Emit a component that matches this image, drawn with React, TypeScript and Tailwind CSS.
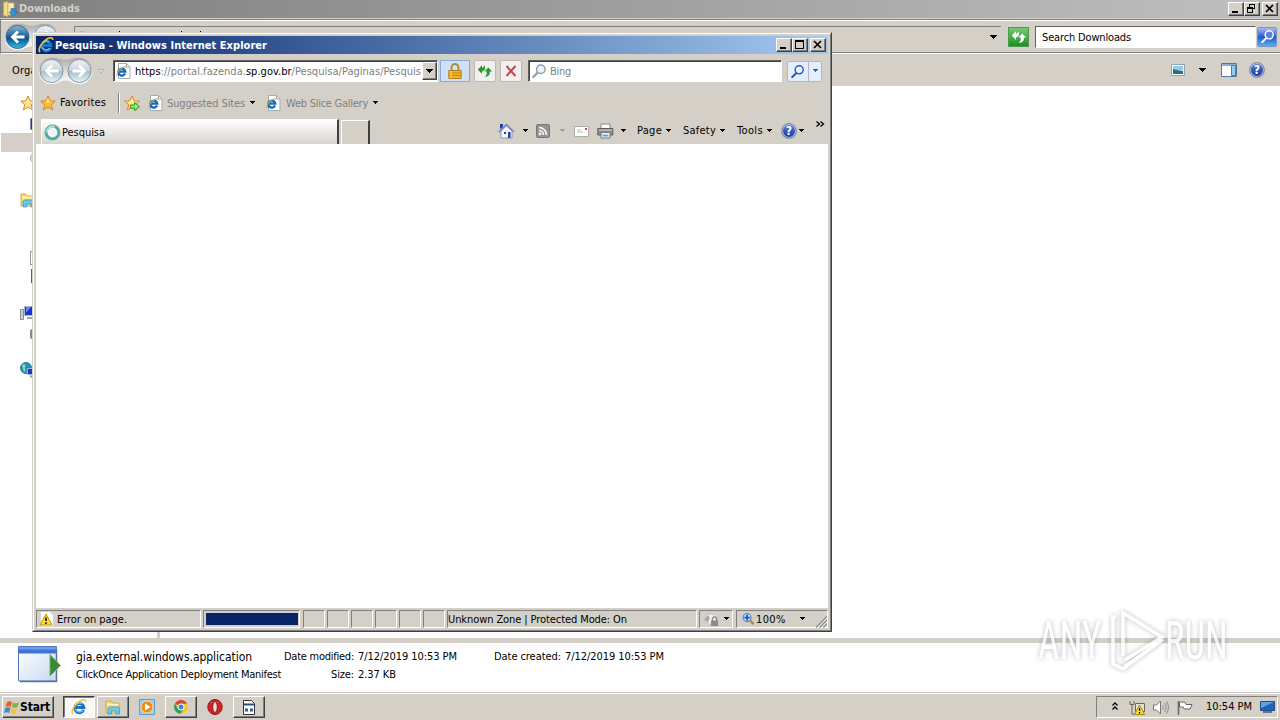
import React, { useLayoutEffect, useRef, useState } from 'react';
import clsx from 'clsx';

// Text squeezed or spread to the width of its box, like the hinted system font does
const Label: React.FC<{ className?: string; children: React.ReactNode }> = ({ className, children }) => {
  const box = useRef<HTMLDivElement>(null);
  const text = useRef<HTMLSpanElement>(null);
  const [spacing, setSpacing] = useState(0);

  useLayoutEffect(() => {
    if (!box.current || !text.current) return;
    const count = (text.current.textContent || '').length;
    if (count < 2) return;
    const diff = box.current.clientWidth - text.current.getBoundingClientRect().width;
    setSpacing((s) => s + diff / count);
  }, []);

  return (
    <div ref={box} className={clsx('shrink-0 whitespace-nowrap', className)}>
      <span ref={text} className="inline-block" style={{ letterSpacing: `${spacing}px` }}>
        {children}
      </span>
    </div>
  );
};

const Arrow: React.FC<{ className?: string }> = ({ className }) => (
  <svg className={clsx('shrink-0', className)} width="7" height="4" viewBox="0 0 7 4" fill="currentColor" shapeRendering="crispEdges">
    <path d="M0.5 0h6L3.5 3.5z" />
  </svg>
);

const BigArrow: React.FC<{ className?: string }> = ({ className }) => (
  <svg className={clsx('shrink-0', className)} width="9" height="5" viewBox="0 0 9 5" fill="currentColor" shapeRendering="crispEdges">
    <path d="M0.5 0h8L4.500 4.500z" />
  </svg>
);

type IconProps = { className?: string; size?: number };

const IeLogo: React.FC<IconProps> = ({ className, size = 16 }) => (
  <svg className={clsx('shrink-0', className)} width={size} height={size} viewBox="0 0 16 16" fill="none">
    <path d="M12.600 10.800A4.600 4.600 0 1 1 12.900 8.600H5" stroke="#1c76c6" strokeWidth="3" />
    <path d="M12 11.200A4.700 4.700 0 0 1 4 10M4.400 6.200A4.600 4.600 0 0 1 11 4.800" stroke="#6fcbf7" strokeWidth="1.200" />
    <path d="M2.200 15C-.8 13 3.600 5.200 9 2c3-1.700 6-1.700 5.800.9" stroke="#f7c52f" strokeWidth="1.600" />
  </svg>
);

const IePage: React.FC<IconProps> = ({ className }) => (
  <svg className={clsx('shrink-0', className)} width="15" height="16" viewBox="0 0 15 16" fill="none">
    <path d="M2.500.5h8l3.500 3.500v11.500H2.500z" fill="#fff" stroke="#a3abb5" />
    <path d="M10.500.5v3.500H14" stroke="#a3abb5" />
    <path d="M9 10.600A3.500 3.500 0 1 1 9.300 8.700H3.500" stroke="#1467b8" strokeWidth="2.300" />
    <path d="M1.200 13C0 11.500 3 6.500 6.500 4.500c2-1.100 3.500-1.200 3.600.4" stroke="#e5ad21" strokeWidth="1.100" />
  </svg>
);

const Star: React.FC<IconProps & { arrow?: boolean; pale?: boolean }> = ({ className, arrow, pale }) => (
  <svg className={clsx('shrink-0', className)} width="16" height="16" viewBox="0 0 16 16" strokeLinejoin="round">
    <path d="M8 1l2.100 4.800 5.200.4-4 3.500 1.300 5.200L8 12.200l-4.600 2.700 1.300-5.200-4-3.500 5.200-.4z" fill={arrow || pale ? '#ffe28a' : '#fdbb32'} stroke="#dc861b" />
    <path d="M8 3l1.300 3.600 3 .4-6.500.6z" fill="#fff3b8" />
    {arrow && <path d="M6.500 10h4V7.500l5 4.200-5 4V13.200h-4z" fill="#8bf06a" stroke="#228d20" strokeWidth=".9" />}
  </svg>
);

const Folder: React.FC<IconProps> = ({ className, size = 16 }) => (
  <svg className={clsx('shrink-0', className)} width={size} height={size} viewBox="0 0 16 16">
    <path d="M1 2h5l1 2h7v10H1z" fill="#f7dd74" stroke="#c79d33" strokeWidth=".8" />
    <path d="M2 5.500h11.500" stroke="#fff6c9" strokeWidth="1.500" />
    <path d="M3 15V9.500C3 8.500 4 8 5 8h7.500c1 0 2 .6 2 1.500V15H11v-3H6.500v3z" fill="#6cc8ec" stroke="#3f95c4" strokeWidth=".8" />
  </svg>
);

const DownloadsFolder: React.FC = () => (
  <svg className="shrink-0" width="16" height="16" viewBox="0 0 16 16">
    <path d="M1.500 1.500L6 .5v15l-4.500-1z" fill="#f5dc80" stroke="#c7a64a" strokeWidth=".8" />
    <path d="M6 2h6v12H6z" fill="#fbedb0" stroke="#d0b35c" strokeWidth=".8" />
    <path d="M9 7.500h4V11h2.500L11 15.700 7 11h2z" fill="#2f95da" stroke="#1c6cab" strokeWidth=".6" />
  </svg>
);

const HelpIcon: React.FC<IconProps> = ({ className }) => (
  <span className={clsx('flex h-4 w-4 shrink-0 items-center justify-center rounded-full border border-[#8390ad] bg-linear-to-b from-[#5f80d8] to-[#172f92] text-[12px] leading-none font-bold text-white shadow-[inset_0_0_0_1px_#b4c3ea]', className)}>
    ?
  </span>
);

const Magnifier: React.FC<IconProps & { color?: string; glass?: string }> = ({ className, size = 16, color = '#1f55cf', glass = '#eaf3ff' }) => (
  <svg className={clsx('shrink-0', className)} width={size} height={size} viewBox="0 0 16 16" fill="none">
    <path d="M6.800 9.500L2.300 14" stroke={color} strokeWidth="2.200" strokeLinecap="round" />
    <circle cx="9.800" cy="6.200" r="4.300" fill={glass} stroke={color} strokeWidth="1.500" />
  </svg>
);

const RefreshArrows: React.FC<IconProps & { color?: string }> = ({ className, color = '#269a2c' }) => (
  <svg className={clsx('shrink-0', className)} width="16" height="16" viewBox="0 0 16 16" fill={color}>
    <path d="M.8 6.500L5 2.200v2.600C6.500 4.600 7 3.500 7.300 2c1.600 3.500.5 6-2.300 6.500V11z" />
    <path d="M15.300 8.500L11.300 4.500 7.500 8.500h2.300c.3 2.300-.4 4-1.800 5.500 3.700-.5 5.200-2.500 4.800-5.500z" />
  </svg>
);

const NavCircles: React.FC<{ active?: boolean }> = ({ active }) => (
  <svg className="shrink-0" width="58" height="28" viewBox="0 0 58 28" fill="none">
    <defs>
      <linearGradient id="navPill" x1="0" y1="0" x2="0" y2="1">
        <stop offset="0" stopColor="#aaa9a8" />
        <stop offset=".5" stopColor="#deddda" />
        <stop offset="1" stopColor="#fff" />
      </linearGradient>
      <linearGradient id="navOff" x1="0" y1="0" x2="0" y2="1">
        <stop offset="0" stopColor="#f1f3f5" />
        <stop offset=".48" stopColor="#cad3dc" />
        <stop offset=".52" stopColor="#a9bccb" />
        <stop offset="1" stopColor="#e6f6fc" />
      </linearGradient>
      <linearGradient id="navOn" x1="0" y1="0" x2="0" y2="1">
        <stop offset="0" stopColor="#8cb6d6" />
        <stop offset=".5" stopColor="#165f95" />
        <stop offset=".55" stopColor="#06508a" />
        <stop offset="1" stopColor="#35c0ea" />
      </linearGradient>
    </defs>
    <path d="M14.500.8c8 0 8 2 14 2s6-2 14-2a13 13 0 0 1 0 26.200c-7 0-8-3.500-14-3.500s-7 3.500-14 3.500a13 13 0 0 1 0-26.200z" fill="url(#navPill)" />
    <circle cx="14.500" cy="14" r="11.500" fill={active ? 'url(#navOn)' : 'url(#navOff)'} stroke={active ? '#3f6c8c' : '#8496a6'} />
    <circle cx="42.500" cy="14" r="11.500" fill="url(#navOff)" stroke="#8496a6" />
    <path d="M21.500 14H10M15 8.500L9.500 14l5.500 5.500" stroke="#fff" strokeWidth="2.800" />
    <path d="M35.500 14H47M42 8.500l5.500 5.500-5.500 5.500" stroke="#fff" strokeWidth="2.800" />
  </svg>
);

const Caption: React.FC<{ kind: 'min' | 'max' | 'restore' | 'close'; className?: string }> = ({ kind, className }) => (
  <span className={clsx('flex h-[14px] w-4 shrink-0 items-center justify-center border border-t-white border-r-[#404040] border-b-[#404040] border-l-white bg-[#d4d0c8] shadow-[inset_-1px_-1px_0_#808080]', className)}>
    <svg className="shrink-0" width="14" height="12" viewBox="0 0 14 12" fill="none" stroke="#000" shapeRendering="crispEdges">
      {kind === 'min' && <path d="M3 9h6" strokeWidth="2" />}
      {kind === 'max' && <path d="M2.500 2.500h8v7h-8zM2 2.500h9M2 1.500h9" />}
      {kind === 'restore' && <path d="M4.500 4V1.500h5v4H8M4 1.500h6M2.500 4.500h5v5h-5zM2 5.500h6" />}
      {kind === 'close' && <path d="M3 2l7 7M10 2L3 9" strokeWidth="1.700" shapeRendering="auto" />}
    </svg>
  </span>
);

const Explorer: React.FC = () => (
  <div className="flex h-[693px] flex-col bg-[#d4d0c8]">
    <div className="flex h-[18px] shrink-0 items-center bg-linear-to-r from-[#808080] to-[#c0c0c0] pr-[2px] pl-[2px]">
      <DownloadsFolder />
      <Label className="ml-px w-[61px] font-bold text-[#d4d0c8]">Downloads</Label>
      <Caption kind="min" className="ml-auto" />
      <Caption kind="restore" />
      <Caption kind="close" className="ml-[2px]" />
    </div>
    <div className="mt-px flex h-[35px] shrink-0 items-center border-t border-b border-l border-[#808080] border-b-white pl-[2px] shadow-[inset_0_1px_0_#fff,inset_0_-1px_0_#808080]">
      <NavCircles active />
      <div className="ml-[13px] flex h-[21px] w-[927px] items-center border-t border-l border-[#808080] pl-1">
        <Folder size={14} />
        <svg className="mb-[11px] ml-[26px]" width="83" height="2" viewBox="0 0 83 2" shapeRendering="crispEdges">
          <path d="M0 0h1v2H0zM62 0h1v2h-1zM81 0h1v2h-1z" />
        </svg>
        <BigArrow className="mr-[3px] ml-auto" />
      </div>
      <span className="ml-[7px] flex h-[20px] w-[21px] items-center justify-center border border-[#4e9850] bg-linear-to-b from-[#75c96f] to-[#129026]">
        <RefreshArrows color="#fff" />
      </span>
      <div className="ml-[6px] flex h-[22px] w-[221px] items-center border border-t-[#606060] border-r-white border-b-white border-l-[#606060] bg-white pl-[6px]">
        <Label className="w-[89px] pt-[2px]">Search Downloads</Label>
      </div>
      <span className="ml-px flex h-[20px] w-[20px] items-center justify-center rounded-[2px] border border-[#7a8fc4] bg-linear-to-b from-[#a6bdf5] via-[#2853ca] to-[#55b5ee]">
        <Magnifier color="#fff" glass="#5484e0" size={15} />
      </span>
    </div>
    <div className="flex h-[32px] shrink-0 items-center pl-[12px]">
      <Label className="w-[46px] pt-px">Organize</Label>
      <svg className="ml-[1113px]" width="14" height="12" viewBox="0 0 14 12">
        <path d="M.5.5h13v11H.5z" fill="#fff" stroke="#8ea3b8" />
        <path d="M2 2h10v4H2z" fill="#8ecaf0" />
        <path d="M2 5l4 1 6 1v3H2z" fill="#2b6f86" />
      </svg>
      <BigArrow className="ml-[13px]" />
      <svg className="ml-[14px]" width="16" height="14" viewBox="0 0 16 14">
        <path d="M.5.5h15v13H.5z" fill="#fff" stroke="#54789d" />
        <path d="M1 1h14v2H1z" fill="#8eafd0" />
        <path d="M10.500 2.500h4v10h-4z" fill="#94cdea" stroke="#4c7ea6" />
      </svg>
      <HelpIcon className="ml-[12px]" />
    </div>
    <div className="flex min-h-0 grow bg-white">
      <div className="flex w-[157px] flex-col pt-[9px]">
        <Star className="ml-[20px]" pale />
        <svg className="mt-[7px] ml-[30px]" width="14" height="12" viewBox="0 0 14 12">
          <path d="M.5.5h14v11H.5z" fill="#1c35a5" stroke="#7d8dc0" />
        </svg>
        <div className="mt-[3px] ml-px h-[19px] w-[150px] bg-[#d4d0c8]" />
        <svg className="ml-[30px]" width="12" height="12" viewBox="0 0 12 12">
          <circle cx="6" cy="6" r="5.500" fill="#d3e1ee" stroke="#a5b4c2" />
        </svg>
        <Folder className="mt-[28px] ml-[20px]" />
        <span className="mt-[43px] ml-[30px] h-[14px] w-3 border border-[#999]" />
        <span className="mt-[4px] ml-[31px] h-[14px] w-3 bg-[#237a69]" />
        <svg className="mt-[22px] ml-[20px]" width="17" height="16" viewBox="0 0 17 16">
          <path d="M.5 4.500h3v10h-3z" fill="#c8d3c8" stroke="#85918a" />
          <path d="M4.500 1.500h12v9h-12z" fill="#1931cc" stroke="#abb8cf" />
          <path d="M6 2h5l-5 6z" fill="#6a87ee" />
          <path d="M7 13h8" stroke="#9aa7b8" strokeWidth="2" />
        </svg>
        <span className="mt-[8px] ml-[30px] h-[10px] w-3 rounded-[2px] bg-[#888]" />
        <svg className="mt-[23px] ml-[20px]" width="16" height="16" viewBox="0 0 16 16">
          <circle cx="6" cy="6" r="5.500" fill="#258fbe" stroke="#397b9c" />
          <path d="M2 3c3-2 4 0 3 2s2 3-1 5z" fill="#8fe0a2" />
          <path d="M7.500 6.500h8v6h-8z" fill="#1a38cd" stroke="#9eb0d0" />
          <path d="M10 14.500h5" stroke="#8798b0" strokeWidth="2" />
        </svg>
      </div>
      <div className="w-[3px] bg-[#d4d0c8]" />
    </div>
    <div className="h-[5px] shrink-0 bg-[#d4d0c8]" />
    <div className="flex h-[49px] shrink-0 bg-white pt-[3px] pl-[18px]">
      <svg width="43" height="37" viewBox="0 0 43 37">
        <defs>
          <linearGradient id="app" x1="0" y1="0" x2="1" y2="1">
            <stop offset="0" stopColor="#fff" />
            <stop offset="1" stopColor="#c9d9f2" />
          </linearGradient>
        </defs>
        <path d="M.5.500h38v34.500H.5z" fill="url(#app)" stroke="#5176ba" />
        <path d="M1 1h37.500v6.500H1z" fill="#3e73dc" />
        <path d="M1 1h37.500v2.500H1z" fill="#6e9cf0" />
        <path d="M38.500 3v32.500H2" stroke="#5f7695" strokeWidth="1.500" fill="none" />
        <path d="M32 8.500L42.500 19.500 32 30z" fill="#398a38" stroke="#6bb660" />
      </svg>
      <div className="ml-[15px] flex flex-col gap-[4px] pt-[4px]">
        <Label className="w-[176px] text-[12px]">gia.external.windows.application</Label>
        <Label className="w-[205px]">ClickOnce Application Deployment Manifest</Label>
      </div>
      <div className="ml-[3px] flex flex-col gap-[4px] pt-[4px]">
        <div className="flex gap-[4px]">
          <Label className="w-[70px]">Date modified:</Label>
          <Label className="w-[99px]">7/12/2019 10:53 PM</Label>
        </div>
        <div className="flex gap-[4px] pl-[47px]">
          <Label className="w-[23px]">Size:</Label>
          <Label className="w-[38px]">2.37 KB</Label>
        </div>
      </div>
      <div className="ml-[37px] flex gap-[4px] pt-[4px]">
        <Label className="w-[67px]">Date created:</Label>
        <Label className="w-[99px]">7/12/2019 10:53 PM</Label>
      </div>
    </div>
    <div className="h-px shrink-0 bg-[#c9c5bd]" />
  </div>
);

const Pane: React.FC<{ className?: string; children?: React.ReactNode }> = ({ className, children }) => (
  <div className={clsx('flex h-[18px] shrink-0 items-center border border-t-[#808080] border-r-white border-b-white border-l-[#808080]', className)}>
    {children}
  </div>
);

const AddressRow: React.FC = () => (
  <div className="flex h-[34px] shrink-0 items-center pl-px">
    <NavCircles />
    <svg className="ml-[2px]" width="8" height="5" viewBox="0 0 8 5">
      <path d="M.8.5h6.400L4 4z" fill="#e6e3de" stroke="#aaa6a0" strokeWidth=".8" />
    </svg>
    <div className="ml-[8px] flex h-[22px] w-[325px] items-center border border-t-[#606060] border-r-white border-b-white border-l-[#606060] bg-white pl-[2px] shadow-[inset_1px_1px_0_#404040]">
      <IePage />
      <Label className="ml-[4px] w-[286px] pt-[2px] text-[#808080]">
        <span className="text-black">https</span>://portal.fazenda.<span className="text-black">sp.gov.br</span>/Pesquisa/Paginas/Pesquis
      </Label>
      <span className="ml-px flex h-[18px] w-[15px] items-center justify-center border border-t-white border-r-[#404040] border-b-[#404040] border-l-white bg-[#d4d0c8] shadow-[inset_-1px_-1px_0_#808080]">
        <BigArrow />
      </span>
    </div>
    <span className="ml-[2px] flex h-[22px] w-[30px] items-center justify-center border border-[#86a9d9] bg-[#cfe0f7]">
      <svg width="14" height="16" viewBox="0 0 14 16" fill="none">
        <path d="M3.500 8V4.500a3.500 3.500 0 0 1 7 0V8" stroke="#b08c36" strokeWidth="1.900" />
        <path d="M.8 7.500h12.400v8H.8z" fill="#f0b52a" stroke="#b47f18" />
        <path d="M1.500 10h11M1.500 12.500h11" stroke="#c0860f" />
        <path d="M3 8v7" stroke="#ffe17d" />
      </svg>
    </span>
    <span className="ml-[4px] flex h-[22px] w-[22px] items-center justify-center rounded-[2px] border border-[#bcb9b3] bg-[#f1f0ee]">
      <RefreshArrows />
    </span>
    <span className="ml-[4px] flex h-[22px] w-[22px] items-center justify-center rounded-[2px] border border-[#bcb9b3] bg-[#f1f0ee]">
      <svg width="12" height="12" viewBox="0 0 12 12" stroke="#c4484e" strokeWidth="2">
        <path d="M1.500 1l9 10M10.500 1l-9 10" />
      </svg>
    </span>
    <div className="ml-[6px] flex h-[22px] w-[254px] items-center border border-t-[#606060] border-r-white border-b-white border-l-[#606060] bg-white pl-[2px] shadow-[inset_1px_1px_0_#404040]">
      <Magnifier color="#8c9dac" />
      <Label className="ml-[3px] w-[21px] pt-[2px] text-[#808080]">Bing</Label>
    </div>
    <div className="ml-[5px] flex h-[21px] w-[35px] items-center rounded-[2px] border border-[#a9b9d4] bg-[#e5eefb]">
      <Magnifier className="ml-[2px]" size={15} />
      <span className="ml-[3px] flex h-full grow items-center justify-center border-l border-[#a9b9d4] text-[#2465a5]">
        <Arrow />
      </span>
    </div>
  </div>
);

const FavoritesRow: React.FC = () => (
  <div className="flex h-[30px] shrink-0 items-center pl-[4px]">
    <Star />
    <Label className="ml-[4px] w-[46px]">Favorites</Label>
    <span className="ml-[12px] h-[20px] w-[2px] border-l border-[#808080] bg-white" />
    <Star className="ml-[4px]" arrow />
    <IePage className="ml-[8px]" />
    <Label className="ml-[4px] w-[78px] pt-px text-[#808080]">Suggested Sites</Label>
    <Arrow className="ml-[4px]" />
    <IePage className="ml-[10px]" />
    <Label className="ml-[5px] w-[82px] pt-px text-[#808080]">Web Slice Gallery</Label>
    <Arrow className="ml-[4px]" />
  </div>
);

const TabRow: React.FC = () => (
  <div className="flex h-[26px] shrink-0 items-end pl-[5px]">
    <div className="flex h-[25px] w-[298px] items-center border-t border-r-2 border-l border-t-white border-r-[#404040] border-l-white bg-linear-to-b from-white to-[#d8d4cd] pl-[2px]">
      <svg width="17" height="17" viewBox="0 0 17 17" fill="none">
        <circle cx="8.500" cy="8.500" r="6.500" fill="#eef5f4" stroke="#4fa6a0" strokeWidth="3" />
        <path d="M2.500 8.500a6 6 0 0 1 8-5.600" stroke="#b4e4dd" strokeWidth="1.800" />
        <circle cx="8.500" cy="8.500" r="8" stroke="#bfd8d4" strokeWidth=".7" />
      </svg>
      <Label className="ml-px w-[43px] pt-px">Pesquisa</Label>
    </div>
    <div className="ml-[2px] h-[24px] w-[29px] border-t border-r-2 border-l border-t-white border-r-[#404040] border-l-white" />
    <div className="flex h-[26px] grow items-center pl-[128px]">
      <svg width="17" height="16" viewBox="0 0 17 16">
        <path d="M3 8v7h11V8L8.500 3z" fill="#f4f8fd" stroke="#8798b5" />
        <path d="M.7 9L8.500 1.500 16 9" fill="none" stroke="#7288b4" strokeWidth="1.500" />
        <path d="M2 1h3v3L2 6z" fill="#2a38ac" />
        <path d="M6 9h2v2H6zM10 9h2.500v6H10z" fill="#263f93" />
      </svg>
      <Arrow className="ml-[7px]" />
      <svg className="ml-[7px]" width="14" height="14" viewBox="0 0 14 14" fill="none" stroke="#fff">
        <rect x=".5" y=".5" width="13" height="13" rx="1.500" fill="#939393" stroke="#777" />
        <circle cx="4" cy="10" r="1" fill="#fff" />
        <path d="M3 6.500a4.500 4.500 0 0 1 4.500 4.500M3 3.500a7.500 7.500 0 0 1 7.500 7.500" strokeWidth="1.500" />
      </svg>
      <Arrow className="ml-[9px] text-[#a19d97]" />
      <svg className="ml-[8px]" width="15" height="11" viewBox="0 0 15 11">
        <path d="M.5.5h14v10H.5z" fill="#fff" stroke="#b0acaa" />
        <path d="M11 2h2v2h-2z" fill="#d44242" />
        <path d="M3 6h6M3 4h4" stroke="#bbb" />
      </svg>
      <svg className="ml-[8px]" width="17" height="16" viewBox="0 0 17 16">
        <path d="M4 5.500V1h9v4.500" fill="#fff" stroke="#888" />
        <path d="M.8 5.500h15v6.500h-15z" fill="#8e8e8e" stroke="#5c5c5c" />
        <path d="M2 7h13" stroke="#d3d3d3" />
        <path d="M4 9.500h9V15H4z" fill="#f5f9ff" stroke="#777" />
        <path d="M5.500 11.500h6v2h-6z" fill="#6ba1d5" />
      </svg>
      <Arrow className="ml-[6px]" />
      <Label className="ml-[10px] w-[25px]">Page</Label>
      <Arrow className="ml-[3px]" />
      <Label className="ml-[11px] w-[33px]">Safety</Label>
      <Arrow className="ml-[3px]" />
      <Label className="ml-[11px] w-[26px]">Tools</Label>
      <Arrow className="ml-[3px]" />
      <HelpIcon className="ml-[8px]" />
      <Arrow className="ml-px" />
      <svg className="mb-[13px] ml-[11px]" width="9" height="7" viewBox="0 0 9 7" fill="none" stroke="#000" strokeWidth="1.300">
        <path d="M.5.500l3 2.500-3 2.500M4.500.500l3 2.500-3 2.500" />
      </svg>
    </div>
  </div>
);

const StatusBar: React.FC = () => (
  <div className="flex h-[20px] shrink-0 items-end bg-[#d4d0c8]">
    <Pane className="w-[165px] pl-[2px]">
      <svg width="16" height="16" viewBox="0 0 16 16">
        <path d="M1.500.5h9l4 4v11h-13z" fill="#fff" stroke="#d4d4d4" />
        <path d="M7 3l6 11H1z" fill="#ffdc2d" stroke="#bd9811" strokeLinejoin="round" />
        <path d="M7 6.500V10M7 11.300V13" stroke="#000" strokeWidth="1.500" />
      </svg>
      <Label className="ml-[2px] w-[70px] pt-px">Error on page.</Label>
    </Pane>
    <Pane className="ml-[2px] w-[97px] pr-px pl-[2px]">
      <span className="h-[12px] w-full bg-[#0a246a]" />
    </Pane>
    <div className="ml-[3px] flex gap-[2px]">
      <Pane className="w-[22px]" />
      <Pane className="w-[22px]" />
      <Pane className="w-[22px]" />
      <Pane className="w-[22px]" />
      <Pane className="w-[22px]" />
      <Pane className="w-[22px]" />
    </div>
    <Pane className="ml-[2px] w-[250px]">
      <Label className="w-[179px] pt-px">Unknown Zone | Protected Mode: On</Label>
    </Pane>
    <Pane className="ml-[2px] w-[34px] pl-[3px]">
      <svg width="16" height="15" viewBox="0 0 16 15" fill="none">
        <path d="M1 8l4-6 8 1 2 9-7 1z" fill="#f1f1f1" stroke="#c8c8c8" />
        <path d="M1 8l4-5 2 3-2 4z" fill="#aaa" />
        <path d="M9.500 9V7a2 2 0 0 1 4 0v2" stroke="#8a8a8a" strokeWidth="1.300" />
        <path d="M8 8.500h7V14H8z" fill="#8b8b8b" />
      </svg>
      <Arrow className="ml-[4px]" />
    </Pane>
    <Pane className="ml-[3px] w-[92px] pl-[5px]">
      <svg width="14" height="14" viewBox="0 0 14 14" fill="none">
        <path d="M8.500 8.500l4 4" stroke="#b58845" strokeWidth="2.500" />
        <circle cx="5.500" cy="5.500" r="4.300" fill="#cfe6fd" stroke="#4c88c9" strokeWidth="1.300" />
        <path d="M5.500 2.500v6M2.500 5.500h6" stroke="#1a5abf" strokeWidth="2" />
      </svg>
      <Label className="ml-px w-[30px] pt-px">100%</Label>
      <Arrow className="ml-[13px]" />
      <svg className="mt-[5px] ml-[10px]" width="12" height="12" viewBox="0 0 12 12" stroke="#808080" strokeWidth="1.300">
        <path d="M0 12L12 0M4 12l8-8M8 12l4-4" />
        <path d="M1.500 12L12 1.500M5.500 12L12 5.500M9.500 12L12 9.500" stroke="#fff" strokeWidth=".8" />
      </svg>
    </Pane>
  </div>
);

const BrowserWindow: React.FC = () => (
  <div className="absolute top-8 left-8 h-[600px] w-[800px] border border-t-[#d4d0c8] border-r-[#404040] border-b-[#404040] border-l-[#d4d0c8]">
    <div className="flex h-full flex-col border border-t-white border-r-[#808080] border-b-[#808080] border-l-white bg-[#d4d0c8] p-[2px]">
      <div className="flex h-[18px] shrink-0 items-center bg-linear-to-r from-[#0a246a] to-[#a6caf0] pr-[2px] pl-[2px]">
        <IeLogo />
        <Label className="ml-px w-[212px] pt-px font-bold text-white">Pesquisa - Windows Internet Explorer</Label>
        <Caption kind="min" className="ml-auto" />
        <Caption kind="max" />
        <Caption kind="close" className="ml-[2px]" />
      </div>
      <AddressRow />
      <FavoritesRow />
      <TabRow />
      <div className="grow bg-white" />
      <StatusBar />
    </div>
  </div>
);

const TaskButton: React.FC<{ className?: string; children: React.ReactNode }> = ({ className, children }) => (
  <div className={clsx('flex h-[22px] w-8 shrink-0 items-center justify-center border border-t-white border-r-[#404040] border-b-[#404040] border-l-white shadow-[inset_-1px_-1px_0_#808080]', className)}>
    {children}
  </div>
);

const Taskbar: React.FC = () => (
  <div className="flex h-[27px] items-center border-t border-white bg-[#d4d0c8] pr-[2px] pl-[2px]">
    <div className="flex h-[22px] w-[52px] items-center border border-t-white border-r-[#404040] border-b-[#404040] border-l-white pl-px shadow-[inset_-1px_-1px_0_#808080]">
      <svg width="16" height="15" viewBox="0 0 16 15">
        <path d="M3 2c2-1.200 3.500-1 5 0L6.800 7C5 6 3.500 6 1.500 7z" fill="#e5602d" />
        <path d="M9 2.500c2 1 4 1 6-.3L13.500 7c-2 1.200-4 1-5.700.3z" fill="#79b843" />
        <path d="M1.200 8c2-1 3.500-1 5.300 0L5 13C3.500 12 2 12 0 13z" fill="#4287cf" />
        <path d="M7.500 8.500c2 1 4 1 5.700-.2L11.800 13c-2 1.200-3.700 1-5.500.2z" fill="#f5c12e" />
      </svg>
      <Label className="w-[30px] text-[12px] font-bold">Start</Label>
    </div>
    <div className="ml-[9px] flex h-[22px] w-8 items-center justify-center border border-t-[#404040] border-r-white border-b-white border-l-[#404040] bg-[#f9f8f7] shadow-[inset_1px_1px_0_#808080]">
      <IeLogo />
    </div>
    <TaskButton className="ml-[2px]">
      <Folder />
    </TaskButton>
    <svg className="ml-[10px]" width="16" height="16" viewBox="0 0 16 16">
      <path d="M.5.5h15v15H.5z" fill="#9cd0f1" stroke="#5d9fcb" />
      <circle cx="8" cy="8" r="6" fill="#f08a19" stroke="#fbd8a0" />
      <path d="M6 4.500L11.500 8 6 11.500z" fill="#fff" />
    </svg>
    <TaskButton className="ml-[10px]">
      <svg width="16" height="16" viewBox="0 0 16 16">
        <circle cx="8" cy="8" r="6.800" fill="#f5c72c" />
        <path d="M8 8L2 4.600A6.800 6.800 0 0 1 14 4.800H8z" fill="#dc4437" />
        <path d="M2 4.600A6.800 6.800 0 0 0 7.500 14.800L10.500 10 5 9.700z" fill="#2e9f53" />
        <circle cx="8" cy="8" r="3.100" fill="#4285dc" stroke="#fff" />
      </svg>
    </TaskButton>
    <svg className="ml-[10px]" width="16" height="16" viewBox="0 0 16 16">
      <ellipse cx="8" cy="8" rx="7.200" ry="7.500" fill="#cf2526" stroke="#911416" />
      <path d="M2.500 4A7 4 0 0 1 13 4l-5-1z" fill="#f08076" />
      <ellipse cx="8" cy="8" rx="2.300" ry="5.500" fill="#e9dede" stroke="#8f1515" />
    </svg>
    <TaskButton className="ml-[10px]">
      <svg width="14" height="15" viewBox="0 0 14 15">
        <path d="M1.500.5h8l3 3v11h-11z" fill="#fff" stroke="#333" />
        <path d="M2 4.500h10" stroke="#294c91" strokeWidth="2" />
        <path d="M3 8.500h3v3H3zM8 8.500h3v3H8z" fill="#3a5c99" />
      </svg>
    </TaskButton>
    <div className="ml-auto flex h-[22px] w-[182px] items-center border border-t-[#808080] border-r-white border-b-white border-l-[#808080] pl-[15px]">
      <svg className="mb-[3px]" width="6" height="8" viewBox="0 0 6 8" fill="none" stroke="#000" strokeWidth="1.300">
        <path d="M.5 3.500L3 1l2.500 2.500M.5 7.500L3 5l2.500 2.500" />
      </svg>
      <svg className="ml-[11px]" width="16" height="15" viewBox="0 0 16 15">
        <path d="M1 1v3.500h4V1M3 4.500V14h4" fill="none" stroke="#666" />
        <path d="M6.500 3.500h9v8h-9z" fill="#e1e1dc" stroke="#666" />
        <path d="M10.500 5l5 9.500h-10z" fill="#ffdf2f" stroke="#aa8a10" />
        <path d="M10.500 8v3M10.500 12v1.500" stroke="#000" strokeWidth="1.300" />
      </svg>
      <svg className="ml-[8px]" width="16" height="15" viewBox="0 0 16 15" fill="none" stroke="#777">
        <path d="M.5 5h3l4-4v13l-4-4h-3z" fill="#fff" />
        <path d="M9.500 5c1 1.500 1 3.500 0 5M11.500 3c2 2.500 2 6.500 0 9M13.500 1.500c2.500 3.500 2.500 8.500 0 12" strokeWidth=".8" />
      </svg>
      <svg className="ml-[8px]" width="16" height="15" viewBox="0 0 16 15" stroke="#666">
        <path d="M1.500 1v14" strokeWidth="1.500" />
        <path d="M2.500 2h5l1.500 2.500h6L13 9H7.500L6 7H2.500z" fill="#fff" />
      </svg>
      <Label className="ml-[13px] w-[46px]">10:54 PM</Label>
      <svg className="ml-[8px]" width="15" height="12" viewBox="0 0 15 12">
        <path d="M.5.5h14v9H.5z" fill="#2162bd" stroke="#264d86" />
        <path d="M1 1h13L1 7z" fill="#629fe3" />
        <path d="M3 11h9" stroke="#5f7592" strokeWidth="2" />
      </svg>
    </div>
  </div>
);

const Watermark: React.FC = () => (
  <div className="absolute top-[606px] left-[1038px] flex h-[70px] w-[200px] items-center font-['Roboto',sans-serif] text-[53px] leading-none text-white opacity-80 [filter:drop-shadow(0_0_2.500px_rgba(0,0,0,0.35))]">
    <div className="w-[67px] shrink-0 pt-px">
      <span className="inline-block origin-left scale-x-[0.7]">ANY</span>
    </div>
    <svg className="shrink-0" width="60" height="70" viewBox="0 0 60 70" fill="none" stroke="#fff" strokeWidth="3.600">
      <path d="M18 50V7l39 24-37 23" />
      <path d="M11 11H8v47l10 5 40-30" />
      <path d="M19 60l31-21" strokeWidth="2" />
    </svg>
    <div className="w-[68px] shrink-0 pt-px">
      <span className="inline-block origin-left scale-x-[0.69]">RUN</span>
    </div>
  </div>
);

const App: React.FC = () => (
  <div className="relative h-[720px] w-[1280px] overflow-hidden bg-white font-['DejaVu_Sans_Condensed','DejaVu_Sans',sans-serif] text-[11px] leading-[14px] text-black [font-stretch:condensed]">
    <Explorer />
    <Taskbar />
    <BrowserWindow />
    <Watermark />
  </div>
);

export default App;
